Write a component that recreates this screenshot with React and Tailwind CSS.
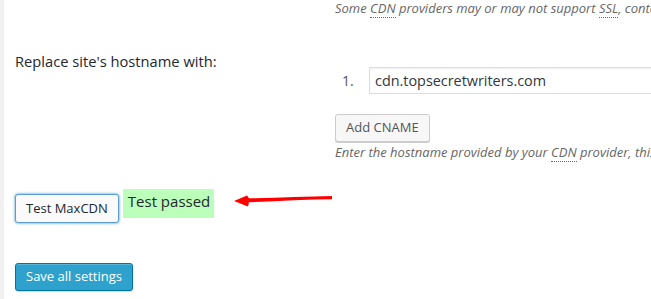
import React from 'react';

function Abbr({ children }) {
  return <span className="border-b border-dotted border-[#666]">{children}</span>;
}

function Arrow() {
  return (
    <svg width="100" height="14" viewBox="0 0 100 14" className="ml-[20px] mt-[5px] shrink-0">
      <polygon
        fill="#ff0000"
        points="0,7 13,1.5 15,4.3 40,3.8 60,3 80,2.4 98,2 98,5.3 80,5.6 60,6.2 40,7.2 15,8.3 14,12.5"
      />
    </svg>
  );
}

export default function App() {
  return (
    <div className="w-[651px] h-[299px] overflow-hidden bg-white border-l-4 border-[#f1f1f1] font-['Open_Sans',sans-serif]">
      <div className="pl-[11px]">
        {/* SSL note */}
        <div className="flex">
          <div className="w-[320px] shrink-0" />
          <p className="text-[13px] leading-[16px] italic text-[#666] whitespace-nowrap">
            Some <Abbr>CDN</Abbr> providers may or may not support <Abbr>SSL</Abbr>, contact your provider for more information.
          </p>
        </div>

        {/* hostname row */}
        <div className="flex mt-[35px]">
          <div className="w-[320px] shrink-0 text-[14.7px] leading-[20px] text-[#23282d] whitespace-nowrap">
            Replace site's hostname with:
          </div>
          <div className="flex flex-col items-start">
            <ol className="mt-[16px] flex items-center">
              <li className="flex items-center">
                <span className="w-[34px] pl-[7px] text-[14px] text-[#555]">1.</span>
                <div className="w-[320px] h-[27px] border border-[#ddd] shadow-[inset_0_1px_2px_rgba(0,0,0,0.07)] flex items-center pl-[5px] text-[14.4px] text-[#32373c] whitespace-nowrap">
                  cdn.topsecretwriters.com
                </div>
              </li>
            </ol>
            <button className="mt-[20px] h-[28px] px-[10px] rounded-[3px] border border-[#ccc] bg-[#f7f7f7] shadow-[0_1px_0_#ccc] text-[13px] text-[#555]">
              Add CNAME
            </button>
            <p className="mt-[2px] text-[13px] leading-[16px] italic text-[#666] whitespace-nowrap">
              Enter the hostname provided by your <Abbr>CDN</Abbr> provider, this value will replace your site's hostname in the HTML.
            </p>
          </div>
        </div>

        {/* test row */}
        <div className="flex items-start mt-[29px]">
          <button className="mt-[5px] h-[29px] px-[10px] rounded-[3px] border border-[#5b9dd9] bg-[#fafafa] shadow-[0_0_3px_rgba(0,115,170,0.8)] text-[13px] text-[#23282d] whitespace-nowrap">
            Test MaxCDN
          </button>
          <span className="ml-[4px] h-[29px] w-[91px] shrink-0 bg-[#bbffbb] pl-[5px] text-[15px] leading-[24px] text-[#23282d] whitespace-nowrap">
            Test passed
          </span>
          <Arrow />
        </div>

        {/* save */}
        <button className="mt-[40px] h-[28px] px-[10px] rounded-[3px] border border-[#0074a2] bg-[#2ea2cc] shadow-[inset_0_1px_0_rgba(120,200,230,0.5),0_1px_0_rgba(0,0,0,0.15)] text-[13px] text-white whitespace-nowrap">
          Save all settings
        </button>
      </div>
    </div>
  );
}
